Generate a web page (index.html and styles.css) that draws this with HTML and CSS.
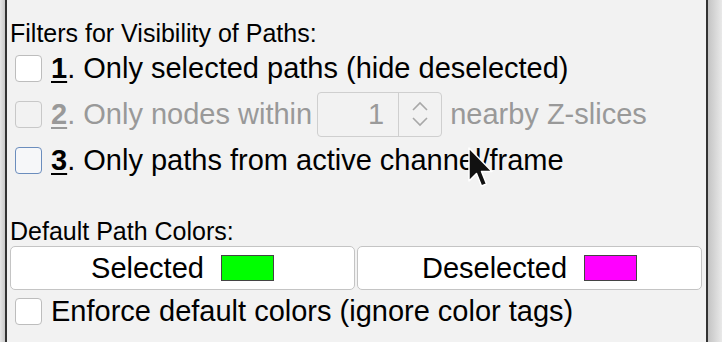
FILE: index.html
```html
<!DOCTYPE html>
<html>
<head>
<meta charset="utf-8">
<link rel="stylesheet" href="styles.css">
</head>
<body>
<div class="frame">
  <div class="edge-left"></div>
  <div class="panel">
    <div class="heading h1">Filters for Visibility of Paths:</div>
    <div class="row">
      <span class="cb"></span>
      <span class="lbl"><u class="num">1</u>. Only selected paths (hide deselected)</span>
    </div>
    <div class="row disabled">
      <span class="cb"></span>
      <span class="lbl"><u class="num">2</u>. Only nodes within</span>
      <span class="spin">
        <span class="spin-val">1</span>
        <span class="spin-btn">
          <svg width="22" height="36" viewBox="0 0 22 36"><path d="M4 14 L11 7 L18 14 M4 22 L11 29 L18 22" fill="none" stroke="#a8a8a8" stroke-width="1.6"/></svg>
        </span>
      </span>
      <span class="lbl">nearby Z-slices</span>
    </div>
    <div class="row">
      <span class="cb focus"></span>
      <span class="lbl"><u class="num">3</u>. Only paths from active channel/frame</span>
    </div>
    <div class="heading h2">Default Path Colors:</div>
    <div class="buttons">
      <div class="btn">Selected <span class="swatch green"></span></div>
      <div class="btn">Deselected <span class="swatch magenta"></span></div>
    </div>
    <div class="row last">
      <span class="cb"></span>
      <span class="lbl">Enforce default colors (ignore color tags)</span>
    </div>
  </div>
  <div class="edge-right"></div>
</div>
<svg class="cursor" width="26" height="44" viewBox="0 0 26 44"><path d="M2 2 L2 35 L9.5 27.5 L14.5 40 L19.5 38 L14.5 25.5 L25 25.5 Z" fill="#111" stroke="#fff" stroke-width="1.5" stroke-linejoin="round"/></svg>
</body>
</html>
```
FILE: styles.css
```css
html, body {
  margin: 0;
  padding: 0;
  width: 722px;
  height: 342px;
  overflow: hidden;
  font-family: "Liberation Sans", Arial, sans-serif;
  color: #000;
}
.frame {
  display: flex;
  height: 342px;
}
.edge-left {
  width: 5px;
  flex: none;
  background: linear-gradient(to right, #e6e6e6, #c9c9c9);
}
.edge-right {
  flex: 1;
  background: linear-gradient(to right, #c4c4c4, #e9e9e9);
}
.panel {
  width: 696px;
  flex: none;
  background: #f2f2f2;
  border-left: 2px solid #333;
  border-right: 2px solid #333;
  padding: 21px 0 0 3px;
  display: flex;
  flex-direction: column;
}
.heading {
  font-size: 25px;
  line-height: 24px;
}
.h2 {
  margin-top: 36px;
}
.row {
  display: flex;
  align-items: center;
  height: 46px;
  font-size: 29px;
  padding-left: 5px;
  flex: none;
}
.row.last {
  height: 42px;
}
.cb {
  width: 25px;
  height: 25px;
  border: 1.5px solid #bdbdbd;
  border-radius: 4px;
  background: #fff;
  margin-right: 9px;
  flex: none;
}
.cb.focus {
  border-color: #6b8dbd;
  background: #f6f7f9;
}
.disabled {
  color: #999;
}
.disabled .cb {
  background: #f2f2f2;
  border-color: #c8c8c8;
}
.num {
  font-weight: bold;
  text-decoration-thickness: 2px;
  text-underline-offset: 3px;
}
.spin {
  display: flex;
  width: 123px;
  height: 43px;
  border: 1.5px solid #cfcfcf;
  border-radius: 4px;
  margin: 0 8px 0 5px;
  flex: none;
}
.spin-val {
  flex: 1;
  text-align: right;
  padding-right: 14px;
  line-height: 43px;
  color: #9a9a9a;
}
.spin-btn {
  width: 42px;
  border-left: 1.5px solid #cfcfcf;
  display: flex;
  align-items: center;
  justify-content: center;
}
.buttons {
  display: flex;
  gap: 2px;
  margin-top: 3px;
  padding-right: 4px;
  flex: none;
}
.btn {
  flex: 1;
  height: 42px;
  background: #fff;
  border: 1.5px solid #c4c4c4;
  border-radius: 5px;
  display: flex;
  align-items: center;
  justify-content: center;
  font-size: 29px;
}
.swatch {
  display: inline-block;
  width: 51px;
  height: 24px;
  border: 1.5px solid #444;
  margin-left: 17px;
}
.green { background: #00ff00; }
.magenta { background: #ff00ff; }
.cursor {
  position: absolute;
  left: 467px;
  top: 146px;
}
```
